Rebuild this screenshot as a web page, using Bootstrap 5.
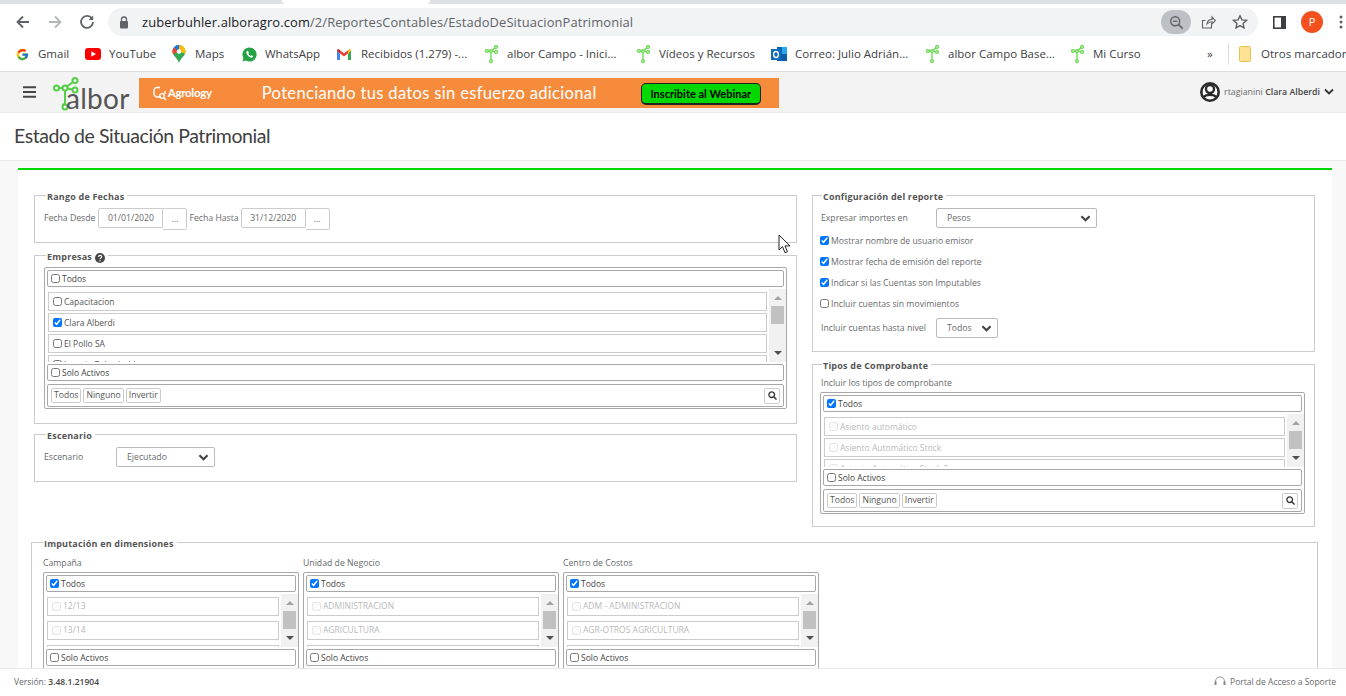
<!DOCTYPE html>
<html lang="es">
<head>
<meta charset="utf-8">
<title>Estado de Situación Patrimonial</title>
<link href="https://cdn.jsdelivr.net/npm/bootstrap@5.3.0/dist/css/bootstrap.min.css" rel="stylesheet">
<style>
html,body{height:696px;overflow:hidden}
body{font-family:"Open Sans",sans-serif;font-size:8.7px;color:#676a6c;background:#fff;line-height:12px}
.tabstrip{height:4px;background:#dee1e6}
.tabstrip-active{width:148px;margin-left:282px;height:4px;background:#fff;border-radius:0 0 6px 6px}
.toolbar{height:33px;padding-left:14px;padding-top:3px;background:#fff}
.tb-btn{width:32px;flex:none}
.addressbar{width:1150px;height:28px;margin-left:-2px;background:#f1f3f4;border-radius:14px;color:#5f6368;font-size:12.9px;padding-left:11px}
.addressbar b{font-weight:400;color:#202124}
.urltext{margin-left:13px;letter-spacing:.12px}
.zoomcirc{width:30px;height:24px;border-radius:12px;background:#bdc1c6;margin-right:10px}
.tb-star{margin-right:10px}
.tb-panel{margin-left:15px}
.avatar-p{width:22px;height:22px;background:#f4511e;font-size:11px;margin-left:15px}
.bookmarks{height:35px;padding-left:16px;display:grid;grid-template-columns:69px 87px 70px 95px 148px 152px 134px 155px 145px 136px 21px 11px 1fr;align-items:center;border-bottom:1px solid #dadce0;color:#3c4043;font-size:11.5px;white-space:nowrap;overflow:hidden}
.bookmarks span.bm-item{display:flex;align-items:center}
.bm-icon{width:22px;flex:none;display:flex}
.bm-w23{width:23px}
.bm-w24{width:24px}
.bm-sep{width:1px;height:22px;background:#dadce0}
.appheader{height:41px;background:#f3f3f4;border-bottom:1px solid #e7eaec;padding-left:23px}
.logo-tree{margin-top:3px}
.logo-word{font-family:"Lato",sans-serif;font-size:28px;color:#555;line-height:30px;margin-left:-14px;margin-top:11px;letter-spacing:.3px}
.banner{width:640px;height:30px;margin-left:9px;background:#f68b3c;color:#fff;margin-top:2px;flex:none}
.banner-brand{font-family:"Lato",sans-serif;font-weight:700;font-size:11.5px;width:123px;padding-left:14px;letter-spacing:-.3px;gap:1px}
.banner-text{font-family:"Lato",sans-serif;font-size:16.6px;width:379px;letter-spacing:.3px}
.banner-btn{width:120px;height:22px;margin-top:2px;background:#00d800;border:1px solid #222;border-bottom-width:2px;border-radius:5px;color:#000;font-family:"Lato",sans-serif;font-weight:700;font-size:11px;line-height:19px;text-align:center}
.userbox{margin-left:auto;padding-right:12px;font-size:8.8px;color:#676a6c}
.userbox strong{color:#454545;font-weight:600}
.pagetitle{height:48px;background:#fff;border-bottom:1px solid #e7eaec;padding-left:14px;font-family:"Lato",sans-serif;font-size:19.5px;line-height:46px;color:#404040;font-weight:400;letter-spacing:-.44px}
.stage{height:507px;background:#f8f8f9;padding:7px 14px 0 18px;overflow:hidden}
.sheet{background:#fff;border-top:2px solid #00d800;padding:25px 16px 0 16px;height:600px}
.colleft{width:763px;flex:none}
.colright{width:503px;flex:none;margin-left:15px}
.fs{border:1px solid #ccc;margin:0;padding:0 9px;min-width:0}
.fs legend{float:none;width:auto;margin:0 0 0 2px;padding:0 3px 0 1px;font-size:9px;line-height:12px;font-weight:700;color:#555;letter-spacing:.2px;position:relative;top:2px}
.fs-fechas{height:54px;margin-top:-6px}
.fs-empresas{height:175px;margin-top:6px}
.fs-escenario{height:54px;margin-top:4px}
.fs-config{height:163px;margin-top:-6px;padding:0 8px}
.fs-config legend{margin-left:1px}
.fs-tipos{height:169px;margin-top:6px;padding:0 9px 0 7px}
.fs-imput{height:300px;margin:9px -2px 0 -3px;padding:0 11px}
.fs-imput legend{margin-left:0}
.top7{margin-top:7px}
.top2{margin-bottom:2px}
.rowfield{height:20px;display:flex;align-items:center}
.datefield{width:65px;height:20px;border:1px solid #ccc;border-radius:2px 0 0 2px;font-size:8.7px;text-align:center;padding:0;color:#676a6c;background:#fff;box-shadow:none;min-height:0}
.datebtn{width:24px;height:22px;border:1px solid #ccc;border-left:0;border-radius:0 2px 2px 0;background:#fff;font-size:9px;padding:0;color:#676a6c;align-self:flex-start}
.lbl-d{margin-right:3px}
.lbl-d2{margin-left:2px;margin-right:2px}
.sel{height:20px;min-height:0;padding:0 0 0 10px;font-size:8.7px;line-height:18px;color:#676a6c;border:1px solid #bbb;border-radius:2px;background-size:11px 9px;background-position:right 5px center;background-image:url("data:image/svg+xml,%3csvg xmlns='http://www.w3.org/2000/svg' viewBox='0 0 12 10'%3e%3cpath fill='none' stroke='%23444' stroke-width='2.4' d='M1.5 2.5 6 7l4.5-4.5'/%3e%3c/svg%3e")}
.sel-pesos{width:161px}
.sel-nivel{width:62px}
.sel-esc{width:99px}
.lbl-sel{width:115px;flex:none}
.lbl-esc{width:72px;flex:none}
.chk{width:9px;height:9px;margin:0 2px 0 0;flex:none;accent-color:#0075ff}
.cfgcheck{height:21px;display:flex;align-items:center;margin-left:-1px}
.msw{border:1px solid #a8a8a8;border-radius:2px;padding:2px;background:#fff;color:#555;overflow:hidden;font-size:8.5px}
.ms-row{height:17px;border:1px solid #a8a8a8;border-radius:2px;display:flex;align-items:center;padding-left:3px;color:#444;background:#fff;position:relative;z-index:1}
.ms-list{height:73px;margin:2px -2px 2px 0;display:flex;overflow:hidden}
.ms-items{flex:1;padding:3px 2px 0 1px;min-width:0}
.ms-item{height:19px;border:1px solid #ccc;margin-bottom:2px;display:flex;align-items:center;padding-left:4px;color:#555;white-space:nowrap}
.ms-off{color:#b9b9b9}
.ms-off .chk{opacity:.55}
.ms-scroll{width:17px;flex:none;background:#f1f1f1;display:flex;flex-direction:column;align-items:center;justify-content:space-between;padding:7px 0;position:relative}
.arr-up{width:0;height:0;border:4px solid transparent;border-top:0;border-bottom:4px solid #a3a3a3}
.arr-dn{width:0;height:0;border:4px solid transparent;border-bottom:0;border-top:4px solid #505050}
.ms-thumb{position:absolute;left:2px;top:17px;width:13px;height:18px;background:#c1c1c1}
.ms-foot{height:23px;margin-top:3px;border:1px solid #a8a8a8;border-radius:2px;display:flex;align-items:center;padding:0 3px;gap:2px}
.ms-btn{height:15px;border:1px solid #ccc;border-radius:2px;padding:0 2px;font-size:8.6px;line-height:13px;color:#555;background:#fff}
.ms-search{margin-left:auto;width:16px;height:16px;padding:0;display:flex;align-items:center;justify-content:center}
.ms-short .ms-list{height:53px}
.w-emp{height:142px;margin-top:6px}
.w-tipos{height:122px;margin-top:2px}
.dim-col{width:256px;margin-right:4px;flex:none}
.dim-col .msw{margin-top:3px;height:110px}
.dim-col .ms-item{margin-bottom:5.5px;height:18.5px}
.dim-label{margin-top:10px;height:11px;line-height:11px}
.tipos-lbl{margin-top:7px;margin-left:1px;height:13px}
.appfoot{height:28px;background:#fff;border-top:1px solid #e7eaec;padding:0 10px 2px 14px;font-size:8.5px;position:relative;color:#676a6c}
.appfoot strong{color:#454545;font-weight:600}
.mouse{position:absolute;left:778px;top:234px;width:14px;height:20px;z-index:5}
</style>
</head>
<body>
<div class="tabstrip"><div class="tabstrip-active"></div></div>
<div class="toolbar d-flex align-items-center">
  <div class="tb-btn"><svg width="18" height="18" viewBox="0 0 18 18"><path d="M15 9H4M9 3.5 3.5 9 9 14.5" fill="none" stroke="#5f6368" stroke-width="1.8"/></svg></div>
  <div class="tb-btn"><svg width="18" height="18" viewBox="0 0 18 18"><path d="M3 9h11M9 3.5 14.5 9 9 14.5" fill="none" stroke="#b3b6ba" stroke-width="1.8"/></svg></div>
  <div class="tb-btn"><svg width="18" height="18" viewBox="0 0 18 18"><path d="M14 5.6A6 6 0 1 0 15 9" fill="none" stroke="#5f6368" stroke-width="1.8"/><path d="M15.2 2.5v4.6h-4.6z" fill="#5f6368"/></svg></div>
  <div class="addressbar d-flex align-items-center">
    <svg width="10" height="13" viewBox="0 0 10 13"><path d="M2.5 5V3.5a2.5 2.5 0 0 1 5 0V5" fill="none" stroke="#5f6368" stroke-width="1.3"/><rect x="1" y="5" width="8" height="7.5" rx="1" fill="#5f6368"/></svg>
    <span class="urltext"><b>zuberbuhler.alboragro.com</b>/2/ReportesContables/EstadoDeSituacionPatrimonial</span>
    <div class="ms-auto d-flex align-items-center">
      <div class="zoomcirc d-flex align-items-center justify-content-center"><svg width="15" height="15" viewBox="0 0 15 15"><circle cx="6.2" cy="6.2" r="4.5" fill="none" stroke="#5f6368" stroke-width="1.4"/><path d="M9.6 9.6l4 4" stroke="#5f6368" stroke-width="1.6"/><path d="M4 6.2h4.4" stroke="#5f6368" stroke-width="1.2"/></svg></div>
      <svg class="me-3" width="15" height="15" viewBox="0 0 15 15"><path d="M10.5 8.5v4.5H1.5V5.5h3M6 9c.4-3 2-4.5 5-4.6V2l3.4 3.6L11 9V6.7C8.900 6.800 7.300 7.500 6 9z" fill="none" stroke="#5f6368" stroke-width="1.1"/></svg>
      <svg class="tb-star" width="16" height="16" viewBox="0 0 16 16"><path d="M8 1.800l1.900 4.100 4.500.5-3.300 3 .9 4.500L8 11.600 4 13.900l.9-4.500-3.300-3 4.500-.5z" fill="none" stroke="#5f6368" stroke-width="1.4"/></svg>
    </div>
  </div>
  <svg class="tb-panel" width="13" height="13" viewBox="0 0 13 13"><rect x=".8" y=".8" width="11.400" height="11.400" fill="none" stroke="#3c4043" stroke-width="1.6"/><rect x="8" y="1" width="4.500" height="11" fill="#3c4043"/></svg>
  <div class="rounded-circle text-white d-flex align-items-center justify-content-center avatar-p">P</div>
  <svg class="ms-3" width="4" height="14" viewBox="0 0 4 14"><circle cx="2" cy="2" r="1.500" fill="#5f6368"/><circle cx="2" cy="7" r="1.500" fill="#5f6368"/><circle cx="2" cy="12" r="1.500" fill="#5f6368"/></svg>
</div>
<nav class="bookmarks">
  <span class="bm-item"><span class="bm-icon"><svg width="13" height="13" viewBox="0 0 48 48"><path fill="#FFC107" d="M43.600 20H24v8.500h11.300C33.700 33.200 29.300 36.500 24 36.500A12.500 12.500 0 1 1 32.200 14.600l6-6A21 21 0 1 0 45 24c0-1.400-.2-2.700-1.400-4z"/><path fill="#FF3D00" d="m6.300 14.700 7 5.100A12.500 12.500 0 0 1 32.200 14.600l6-6A21 21 0 0 0 6.300 14.700z"/><path fill="#4CAF50" d="M24 45c5.400 0 10.300-2 14-5.400l-6.500-5.500A12.500 12.500 0 0 1 12.900 29.800l-6.900 5.300A21 21 0 0 0 24 45z"/><path fill="#1976D2" d="M43.600 20H24v8.500h11.300a12.500 12.500 0 0 1-4 5.600l6.500 5.500C42 36 45 30.500 45 24c0-1.400-.2-2.700-1.400-4z"/></svg></span>Gmail</span>
  <span class="bm-item"><span class="bm-icon bm-w24"><svg width="16" height="12" viewBox="0 0 16 12"><rect width="16" height="12" rx="3" fill="#f00"/><path d="M6.300 3.300v5.400L11 6z" fill="#fff"/></svg></span>YouTube</span>
  <span class="bm-item"><span class="bm-icon bm-w23"><svg width="14" height="18" viewBox="0 0 14 18"><path d="M7 0a6.500 6.500 0 0 1 6.500 6.500C13.500 11 8.500 13 7 18 5.500 13 .5 11 .5 6.500A6.500 6.500 0 0 1 7 0z" fill="#34a853"/><path d="M2 2.300 7 6.500 1 9a6.500 6.500 0 0 1 1-6.700z" fill="#ea4335"/><path d="M2 2.300A6.500 6.500 0 0 1 7 0l3 1.500L7 6.500z" fill="#1a73e8"/><path d="M7 0a6.500 6.500 0 0 1 6.500 6.500c0 .8-.2 1.500-.5 2.200L7 6.500z" fill="#fbbc04"/><circle cx="7" cy="6.500" r="2.300" fill="#fff"/></svg></span>Maps</span>
  <span class="bm-item"><span class="bm-icon bm-w23"><svg width="15" height="15" viewBox="0 0 15 15"><path d="M7.500.5a7 7 0 0 0-6 10.600L.5 14.500l3.500-1A7 7 0 1 0 7.500.5z" fill="#25a244"/><path d="M5 4c-1 1-.8 2.500.5 4.200C7 10 9 11 10.200 10.500c.8-.4 1-1 .9-1.400L9.500 8.200l-.8.800C7.800 8.600 6.800 7.700 6.300 6.500l.7-.8L6 4z" fill="#fff"/></svg></span>WhatsApp</span>
  <span class="bm-item"><span class="bm-icon bm-w24"><svg width="14" height="11" viewBox="0 0 14 11"><path d="M0 1.500V11h3V4.500z" fill="#4285f4"/><path d="M14 1.500V11h-3V4.500z" fill="#34a853"/><path d="M11 4.500 14 1.500C14 .3 13 0 12 .5L11 1.300z" fill="#fbbc04"/><path d="M3 4.500 7 7.500l4-3V1.300L7 4.300 3 1.300z" fill="#ea4335"/><path d="M0 1.500 3 4.500V1.300L2 .5C1 0 0 .3 0 1.500z" fill="#c5221f"/></svg></span>Recibidos (1.279) -...</span>
  <span class="bm-item"><span class="bm-icon"><svg width="13" height="18" viewBox="0 0 13 18"><g fill="none" stroke="#63d84a" stroke-width="1.300"><circle cx="2" cy="6" r="1.400"/><circle cx="6" cy="6" r="1.400"/><circle cx="11" cy="2" r="1.400"/><circle cx="11" cy="7" r="1.400"/><circle cx="6" cy="16" r="1.400"/><path d="M6 7.500v7M3.500 6h1M7.300 5l2.600-2M7.500 6l2 .7"/></g></svg></span>albor Campo - Inici...</span>
  <span class="bm-item"><span class="bm-icon"><svg width="13" height="18" viewBox="0 0 13 18"><g fill="none" stroke="#63d84a" stroke-width="1.300"><circle cx="2" cy="6" r="1.400"/><circle cx="6" cy="6" r="1.400"/><circle cx="11" cy="2" r="1.400"/><circle cx="11" cy="7" r="1.400"/><circle cx="6" cy="16" r="1.400"/><path d="M6 7.500v7M3.500 6h1M7.300 5l2.600-2M7.500 6l2 .7"/></g></svg></span>Vídeos y Recursos</span>
  <span class="bm-item"><span class="bm-icon bm-w24"><svg width="16" height="16" viewBox="0 0 16 16"><rect x="6" y="1" width="10" height="14" fill="#28a8ea"/><rect x="6" y="1" width="5" height="7" fill="#0364b8"/><rect x="6" y="8" width="10" height="7" fill="#0a5ca8"/><rect y="3" width="10" height="11" fill="#0f6cbd"/><ellipse cx="5" cy="8.500" rx="2.400" ry="3" fill="none" stroke="#fff" stroke-width="1.300"/></svg></span>Correo: Julio Adrián...</span>
  <span class="bm-item"><span class="bm-icon"><svg width="13" height="18" viewBox="0 0 13 18"><g fill="none" stroke="#63d84a" stroke-width="1.300"><circle cx="2" cy="6" r="1.400"/><circle cx="6" cy="6" r="1.400"/><circle cx="11" cy="2" r="1.400"/><circle cx="11" cy="7" r="1.400"/><circle cx="6" cy="16" r="1.400"/><path d="M6 7.500v7M3.500 6h1M7.300 5l2.600-2M7.500 6l2 .7"/></g></svg></span>albor Campo Base...</span>
  <span class="bm-item"><span class="bm-icon"><svg width="13" height="18" viewBox="0 0 13 18"><g fill="none" stroke="#63d84a" stroke-width="1.300"><circle cx="2" cy="6" r="1.400"/><circle cx="6" cy="6" r="1.400"/><circle cx="11" cy="2" r="1.400"/><circle cx="11" cy="7" r="1.400"/><circle cx="6" cy="16" r="1.400"/><path d="M6 7.500v7M3.500 6h1M7.300 5l2.600-2M7.500 6l2 .7"/></g></svg></span>Mi Curso</span>
  <span>»</span>
  <span class="bm-sep"></span>
  <span class="bm-item"><span class="bm-icon"><svg width="12" height="16" viewBox="0 0 12 16"><rect x=".5" y=".5" width="11" height="15" rx="1" fill="#fde293" stroke="#e8c04e"/></svg></span>Otros marcadores</span>
</nav>
<header class="appheader d-flex align-items-center">
  <svg width="14" height="12" viewBox="0 0 14 12"><path d="M0 1.300h13M0 6h13M0 10.700h13" stroke="#454545" stroke-width="2"/></svg>
  <svg class="ms-3 logo-tree" width="27" height="34" viewBox="0 0 27 34"><g fill="none" stroke="#55cf45" stroke-width="2"><circle cx="3.500" cy="11" r="2.500"/><circle cx="12" cy="11" r="2.500"/><circle cx="22" cy="3.500" r="2.500"/><circle cx="22" cy="13" r="2.500"/><circle cx="12" cy="30" r="2.500"/><path d="M12 13.500v14M6 11h3.500M14 9.500l6-4.500M14.500 11.500l5 1M9 27.500h3"/></g></svg>
  <span class="logo-word">albor</span>
  <div class="banner d-flex align-items-center">
    <div class="banner-brand d-flex align-items-center"><svg width="14" height="15" viewBox="0 0 14 15"><path d="M7 1.500H4A3 3 0 0 0 1 4.500v3A3.500 3.500 0 0 0 4.500 11H8M12 8V5" fill="none" stroke="#fff" stroke-width="1.400"/><circle cx="9" cy="10" r="2.300" fill="none" stroke="#fff" stroke-width="1.300"/><path d="m10.800 11.800 2.200 2.200" stroke="#fff" stroke-width="1.400"/></svg>Agrology</div>
    <div class="banner-text">Potenciando tus datos sin esfuerzo adicional</div>
    <div class="banner-btn">Inscribite al Webinar</div>
  </div>
  <div class="userbox d-flex align-items-center gap-1">
    <svg width="20" height="22" viewBox="0 0 20 22"><circle cx="10" cy="11" r="8.700" fill="#fff" stroke="#2b2b2b" stroke-width="2.600"/><circle cx="10" cy="8" r="4" fill="none" stroke="#2b2b2b" stroke-width="2.400"/><path d="M3.500 16.500c2-3.500 11-3.500 13 0" fill="none" stroke="#2b2b2b" stroke-width="2.400"/></svg>
    <span>rtagianini <strong>Clara Alberdi</strong></span>
    <svg width="10" height="8" viewBox="0 0 10 8"><path d="M1 1.500 5 5.500l4-4" fill="none" stroke="#333" stroke-width="1.800"/></svg>
  </div>
</header>
<div class="pagetitle">Estado de Situación Patrimonial</div>
<main class="stage">
  <div class="sheet">
    <div class="d-flex">
      <div class="colleft">
        <fieldset class="fs fs-fechas">
          <legend>Rango de Fechas</legend>
          <div class="rowfield top7">
            <span class="lbl-d">Fecha Desde</span><input class="datefield" value="01/01/2020"><button class="datebtn" type="button">...</button>
            <span class="lbl-d lbl-d2">Fecha Hasta</span><input class="datefield" value="31/12/2020"><button class="datebtn" type="button">...</button>
          </div>
        </fieldset>
        <fieldset class="fs fs-empresas">
          <legend>Empresas <svg width="10" height="10" viewBox="0 0 10 10"><circle cx="5" cy="5" r="5" fill="#454545"/><path d="M3.500 3.900c0-2 3.200-2 3.200-.1 0 1.200-1.700 1.200-1.700 2.500" fill="none" stroke="#fff" stroke-width="1.100"/><circle cx="5" cy="7.800" r=".7" fill="#fff"/></svg></legend>
          <div class="msw w-emp">
            <div class="ms-row"><input type="checkbox" class="chk">Todos</div>
            <div class="ms-list">
              <div class="ms-items">
                <div class="ms-item"><input type="checkbox" class="chk">Capacitacion</div>
                <div class="ms-item"><input type="checkbox" class="chk" checked>Clara Alberdi</div>
                <div class="ms-item"><input type="checkbox" class="chk">El Pollo SA</div>
                <div class="ms-item"><input type="checkbox" class="chk">Ignacio Zuberbuhler</div>
              </div>
              <div class="ms-scroll"><div class="arr-up"></div><div class="ms-thumb"></div><div class="arr-dn"></div></div>
            </div>
            <div class="ms-row"><input type="checkbox" class="chk">Solo Activos</div>
            <div class="ms-foot"><span class="ms-btn">Todos</span><span class="ms-btn">Ninguno</span><span class="ms-btn">Invertir</span><span class="ms-btn ms-search"><svg width="9" height="9" viewBox="0 0 9 9"><circle cx="3.700" cy="3.700" r="2.800" fill="none" stroke="#333" stroke-width="1.300"/><path d="m5.800 5.800 2.700 2.700" stroke="#333" stroke-width="1.500"/></svg></span></div>
          </div>
        </fieldset>
        <fieldset class="fs fs-escenario">
          <legend>Escenario</legend>
          <div class="d-flex align-items-center top7"><span class="lbl-esc">Escenario</span><select class="form-select sel sel-esc"><option>Ejecutado</option></select></div>
        </fieldset>
      </div>
      <div class="colright">
        <fieldset class="fs fs-config">
          <legend>Configuración del reporte</legend>
          <div class="d-flex align-items-center top7 top2"><span class="lbl-sel">Expresar importes en</span><select class="form-select sel sel-pesos"><option>Pesos</option></select></div>
          <label class="cfgcheck"><input type="checkbox" class="chk" checked>Mostrar nombre de usuario emisor</label>
          <label class="cfgcheck"><input type="checkbox" class="chk" checked>Mostrar fecha de emisión del reporte</label>
          <label class="cfgcheck"><input type="checkbox" class="chk" checked>Indicar si las Cuentas son Imputables</label>
          <label class="cfgcheck"><input type="checkbox" class="chk">Incluir cuentas sin movimientos</label>
          <div class="d-flex align-items-center mt-1"><span class="lbl-sel">Incluir cuentas hasta nivel</span><select class="form-select sel sel-nivel"><option>Todos</option></select></div>
        </fieldset>
        <fieldset class="fs fs-tipos">
          <legend>Tipos de Comprobante</legend>
          <div class="tipos-lbl">Incluir los tipos de comprobante</div>
          <div class="msw w-tipos ms-short">
            <div class="ms-row"><input type="checkbox" class="chk" checked>Todos</div>
            <div class="ms-list">
              <div class="ms-items">
                <div class="ms-item ms-off"><input type="checkbox" class="chk" disabled>Asiento automático</div>
                <div class="ms-item ms-off"><input type="checkbox" class="chk" disabled>Asiento Automático Stock</div>
                <div class="ms-item ms-off"><input type="checkbox" class="chk" disabled>Asiento Automático Stock 2</div>
              </div>
              <div class="ms-scroll"><div class="arr-up"></div><div class="ms-thumb"></div><div class="arr-dn"></div></div>
            </div>
            <div class="ms-row"><input type="checkbox" class="chk">Solo Activos</div>
            <div class="ms-foot"><span class="ms-btn">Todos</span><span class="ms-btn">Ninguno</span><span class="ms-btn">Invertir</span><span class="ms-btn ms-search"><svg width="9" height="9" viewBox="0 0 9 9"><circle cx="3.700" cy="3.700" r="2.800" fill="none" stroke="#333" stroke-width="1.300"/><path d="m5.800 5.800 2.700 2.700" stroke="#333" stroke-width="1.500"/></svg></span></div>
          </div>
        </fieldset>
      </div>
    </div>
    <fieldset class="fs fs-imput">
      <legend>Imputación en dimensiones</legend>
      <div class="d-flex">
        <div class="dim-col">
          <div class="dim-label">Campaña</div>
          <div class="msw ms-short">
            <div class="ms-row"><input type="checkbox" class="chk" checked>Todos</div>
            <div class="ms-list"><div class="ms-items"><div class="ms-item ms-off"><input type="checkbox" class="chk" disabled>12/13</div><div class="ms-item ms-off"><input type="checkbox" class="chk" disabled>13/14</div><div class="ms-item ms-off"><input type="checkbox" class="chk" disabled>14/15</div></div><div class="ms-scroll"><div class="arr-up"></div><div class="ms-thumb"></div><div class="arr-dn"></div></div></div>
            <div class="ms-row"><input type="checkbox" class="chk">Solo Activos</div>
          </div>
        </div>
        <div class="dim-col">
          <div class="dim-label">Unidad de Negocio</div>
          <div class="msw ms-short">
            <div class="ms-row"><input type="checkbox" class="chk" checked>Todos</div>
            <div class="ms-list"><div class="ms-items"><div class="ms-item ms-off"><input type="checkbox" class="chk" disabled>ADMINISTRACION</div><div class="ms-item ms-off"><input type="checkbox" class="chk" disabled>AGRICULTURA</div><div class="ms-item ms-off"><input type="checkbox" class="chk" disabled>GANADERIA</div></div><div class="ms-scroll"><div class="arr-up"></div><div class="ms-thumb"></div><div class="arr-dn"></div></div></div>
            <div class="ms-row"><input type="checkbox" class="chk">Solo Activos</div>
          </div>
        </div>
        <div class="dim-col">
          <div class="dim-label">Centro de Costos</div>
          <div class="msw ms-short">
            <div class="ms-row"><input type="checkbox" class="chk" checked>Todos</div>
            <div class="ms-list"><div class="ms-items"><div class="ms-item ms-off"><input type="checkbox" class="chk" disabled>ADM - ADMINISTRACION</div><div class="ms-item ms-off"><input type="checkbox" class="chk" disabled>AGR-OTROS AGRICULTURA</div><div class="ms-item ms-off"><input type="checkbox" class="chk" disabled>AGR-SOJA</div></div><div class="ms-scroll"><div class="arr-up"></div><div class="ms-thumb"></div><div class="arr-dn"></div></div></div>
            <div class="ms-row"><input type="checkbox" class="chk">Solo Activos</div>
          </div>
        </div>
      </div>
    </fieldset>
  </div>
</main>
<footer class="appfoot d-flex align-items-center">
  <span>Versión: <strong>3.48.1.21904</strong></span>
  <span class="ms-auto d-flex align-items-center gap-1"><svg width="12" height="11" viewBox="0 0 12 11"><path d="M1.500 7V5.500a4.500 4.500 0 0 1 9 0V7" fill="none" stroke="#999" stroke-width="1.100"/><rect x=".5" y="5.500" width="2" height="3.500" fill="#888"/><rect x="9.500" y="5.500" width="2" height="3.500" fill="#888"/></svg>Portal de Acceso a Soporte</span>
</footer>
<svg class="mouse" viewBox="0 0 14 20"><path d="M1 1v15l3.500-3.300 2.500 6 2.500-1-2.500-5.800h5z" fill="#fff" stroke="#222" stroke-width="1"/></svg>
</body>
</html>
